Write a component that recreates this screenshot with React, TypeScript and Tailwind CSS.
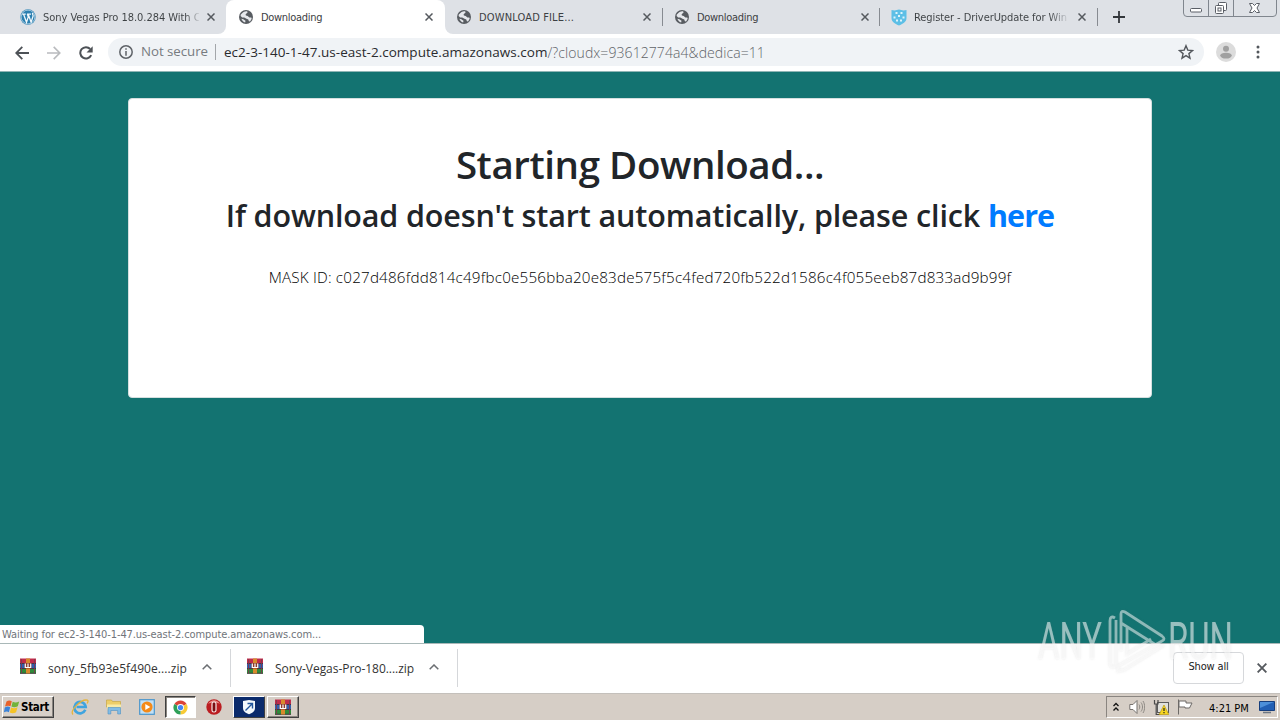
import type { ReactNode } from "react";

function Globe() {
  return (
    <svg viewBox="0 0 16 16" className="h-4 w-4 shrink-0">
      <circle cx="8" cy="8" r="7" fill="#585c61" />
      <path d="M5.2 3.2c1.5-.9 2.8-1 3.9-.9l.5 1.3-2 1.6.3 1.4 1.8.3 1.7 1.5 1.9.2.4 1.2-1.6 2.6-1.2-.1-.6-1.7-1.8-.9-2.3-1.1-2-.2-1.6-1.4.2-1.6z" fill="#e6e8ec" />
      <path d="M3.4 9.8l1.9.5 2.2 1.5-.3 1.6C5.200 13 4 11.700 3.400 9.800z" fill="#e6e8ec" />
    </svg>
  );
}

function WordPress() {
  return (
    <svg viewBox="0 0 16 16" className="h-4 w-4 shrink-0">
      <circle cx="8" cy="8" r="7.700" fill="#2a7fb0" />
      <circle cx="8" cy="8" r="6.900" fill="none" stroke="#d6e6f0" strokeWidth=".7" />
      <path d="M2.200 5h3.600M7 5h4M3.500 5l3 8.300L8.300 8 7.300 5M8.200 5l2.900 8.200 2-6.200c.2-1.200-.8-1.600-.6-3" fill="none" stroke="#f2f8fc" strokeWidth="1.250" />
    </svg>
  );
}

function Shield() {
  return (
    <svg viewBox="0 0 16 17" className="h-[17px] w-4 shrink-0">
      <path d="M.5 1l3 .6L8 .5l4.500 1.100 3-.6v8c0 4-4 6-7.500 7.500C4.500 15 .5 13 .5 9z" fill="#5dbfe6" />
      <path d="M4.500 4h2M9.500 4h2M7 7h2M2.500 8.500h2M11.500 8.500h2M5 11.500h2M9 11.500h2" stroke="#dff4fb" strokeWidth="2.200" />
    </svg>
  );
}

function Cross({ className = "h-2 w-2" }: { className?: string }) {
  return (
    <svg viewBox="0 0 8 8" className={`${className} shrink-0`}>
      <path d="M.5.5l7 7M7.500.5l-7 7" stroke="#55595e" strokeWidth="1.500" />
    </svg>
  );
}

function Tab({ icon, children, className = "" }: { icon: ReactNode; children: ReactNode; className?: string }) {
  return (
    <div className={`flex h-[34px] shrink-0 items-center pl-3 text-[11px] text-[#3c4043] ${className}`}>
      {icon}
      <span className="mt-0.5 ml-[7px] w-[156px] overflow-hidden leading-4 whitespace-nowrap">{children}</span>
      <span className="ml-1.5 flex w-3 justify-center">
        <Cross />
      </span>
    </div>
  );
}

function WindowButtons() {
  return (
    <svg viewBox="0 0 94 18" className="ml-auto mr-[3px] h-[18px] w-[94px] self-start">
      <path d="M.5 0v13q0 3.500 3.500 3.500h86q3.500 0 3.500-3.500V0M25.500 0v16M50.500 0v16" fill="none" stroke="#80868e" />
      <rect x="7.500" y="8.500" width="11" height="3.500" rx="1" fill="#fff" stroke="#5a5e66" />
      <rect x="35.500" y="2.500" width="8" height="8" rx="1" fill="#fff" stroke="#5a5e66" />
      <rect x="32.500" y="5.500" width="8" height="8" rx="1" fill="#fff" stroke="#5a5e66" />
      <rect x="35" y="8" width="3" height="3" fill="#fff" stroke="#5a5e66" />
      <path d="M66.500 3.500h3l2 2 2-2h3L74 8l2.500 4.500h-3l-2-2-2 2h-3L69 8z" fill="#fff" stroke="#5a5e66" />
    </svg>
  );
}

function Archive({ className = "" }: { className?: string }) {
  return (
    <svg viewBox="0 0 16 16" className={`h-4 w-4 shrink-0 ${className}`}>
      <path d="M0 .5h16v5H0z" fill="#c02c4a" />
      <path d="M0 5.500h16v5H0z" fill="#315fae" />
      <path d="M0 10.500h16v5H0z" fill="#2f8a3a" />
      <path d="M0 5.500h16M0 10.500h16M0 15.300h16" stroke="#3a2030" strokeWidth=".8" />
      <path d="M1.500 1v14M14.500 1v14" stroke="#7e3a50" strokeWidth=".9" />
      <path d="M6 .5h4v15H6z" fill="#d98a2c" />
      <path d="M4.500 5h7v5.500h-7z" fill="#8b3b2c" />
      <path d="M5.300 5.500v4h5.400v-4M8 5.500v3.500" fill="none" stroke="#fff" strokeWidth="1.200" />
    </svg>
  );
}

function Download({ name, className }: { name: string; className: string }) {
  return (
    <div className="flex h-[38px] items-center border-r border-[#d5d7da]">
      <Archive className="mb-1" />
      <span className={`mt-0.5 ml-3 w-[139px] shrink-0 text-[12px] whitespace-nowrap text-[#333] font-['Open_Sans',sans-serif] ${className}`}>{name}</span>
      <svg viewBox="0 0 10 6" className="mr-[18px] mb-0.5 ml-[15px] h-1.5 w-2.5">
        <path d="M.7 5.300L5 1l4.300 4.300" fill="none" stroke="#6b6e72" strokeWidth="1.500" />
      </svg>
    </div>
  );
}

function TabStrip() {
  return (
    <div className="flex h-[34px] items-center bg-[#dee1e6]">
      <div className="h-[34px] w-[226px] bg-white">
        <Tab icon={<WordPress />} className="rounded-br-lg bg-[#dee1e6] pl-5 tracking-[-0.040px]">
          <span className="bg-linear-to-r from-[#3c4043] from-90% to-[#dee1e6] bg-clip-text text-transparent">Sony Vegas Pro 18.0.284 With C</span>
        </Tab>
      </div>
      <div className="w-[219px] self-stretch bg-[#dee1e6]">
        <Tab icon={<Globe />} className="rounded-t-lg bg-white tracking-[-0.3px]">Downloading</Tab>
      </div>
      <div className="w-[218px] bg-white">
        <Tab icon={<Globe />} className="rounded-bl-lg bg-[#dee1e6] pl-[11px] tracking-[0.15px]">DOWNLOAD FILE...</Tab>
      </div>
      <div className="-ml-px h-[18px] w-px bg-[#878b91]" />
      <div className="w-[217px]">
        <Tab icon={<Globe />} className="pl-[11px] tracking-[-0.3px]">Downloading</Tab>
      </div>
      <div className="-ml-px h-[18px] w-px bg-[#878b91]" />
      <div className="w-[218px]">
        <Tab icon={<Shield />} className="pl-[11px] tracking-[-0.080px]">
          <span className="bg-linear-to-r from-[#3c4043] from-88% to-[#c6cad0] bg-clip-text text-transparent">Register - DriverUpdate for Win</span>
        </Tab>
      </div>
      <div className="-ml-px h-[18px] w-px bg-[#878b91]" />
      <svg viewBox="0 0 12 12" className="ml-[15px] h-3 w-3">
        <path d="M6 0v12M0 6h12" stroke="#33373b" strokeWidth="1.800" />
      </svg>
      <WindowButtons />
    </div>
  );
}

function Toolbar() {
  return (
    <div className="flex h-[38px] items-center border-b border-[#8fb5b5] bg-white pl-[15px] font-['Open_Sans',sans-serif]">
      <svg viewBox="0 0 14 14" className="h-3.5 w-3.5">
        <path d="M14 7H1.500M7.300.9L1.200 7l6.100 6.100" fill="none" stroke="#4d5156" strokeWidth="1.800" />
      </svg>
      <svg viewBox="0 0 14 14" className="ml-[18px] h-3.5 w-3.5">
        <path d="M0 7h12.500M6.700.9L12.800 7l-6.100 6.100" fill="none" stroke="#b9bbbe" strokeWidth="1.600" />
      </svg>
      <svg viewBox="0 0 14 14" className="ml-[18px] h-3.5 w-3.5">
        <path d="M12.200 9.200A5.700 5.700 0 1 1 11.200 3" fill="none" stroke="#4d5156" strokeWidth="2" />
        <path d="M13.700.2v6.200H7.500z" fill="#4d5156" />
      </svg>
      <div className="mb-px ml-[15px] flex h-7 w-[1096px] items-center rounded-full bg-[#f0f3f6] pl-[11px] whitespace-nowrap">
        <svg viewBox="0 0 14 14" className="h-3.5 w-3.5">
          <circle cx="7" cy="7" r="6.200" fill="none" stroke="#5f6368" strokeWidth="1.500" />
          <path d="M7 3.200v1.600M7 6v4.800" stroke="#5f6368" strokeWidth="1.500" />
        </svg>
        <span className="ml-2 w-[67px] text-[13.3px] tracking-[-0.050px] text-[#777b80]">Not secure</span>
        <span className="ml-[7px] h-4 w-px bg-[#a3a6aa]" />
        <span className="ml-2 text-[13.5px] tracking-[0.020px] text-[#2a2b2e]">ec2-3-140-1-47.us-east-2.compute.amazonaws.com</span>
        <span className="text-[14px] font-light tracking-[0.080px] text-[#5f6368]">/?cloudx=93612774a4&amp;dedica=11</span>
        <svg viewBox="0 0 16 16" className="ml-auto mr-2.5 h-4 w-4">
          <path d="M8 1.700l1.800 4.400 4.700.4-3.600 3.100 1.100 4.600L8 11.700l-4 2.500 1.100-4.600L1.500 6.500l4.700-.4z" fill="none" stroke="#53575c" strokeWidth="1.400" />
        </svg>
      </div>
      <svg viewBox="0 0 20 20" className="mb-px ml-3 h-5 w-5">
        <circle cx="10" cy="10" r="10" fill="#dcdcdc" />
        <circle cx="10" cy="6.700" r="3" fill="#a0a0a0" />
        <ellipse cx="10" cy="13.600" rx="5.800" ry="2.900" fill="#a0a0a0" />
      </svg>
      <svg viewBox="0 0 4 14" className="mb-px ml-5 h-3.5 w-1" fill="#53575c">
        <circle cx="2" cy="2" r="1.500" />
        <circle cx="2" cy="7" r="1.500" />
        <circle cx="2" cy="12" r="1.500" />
      </svg>
    </div>
  );
}

function Page() {
  return (
    <main className="flex h-[571px] flex-col items-center bg-[#137371] pt-[26px] font-['Open_Sans',sans-serif]">
      <section className="h-[300px] w-[1024px] rounded border border-[#d5dfdf] bg-white text-center text-[#212529]">
        <h1 className="mt-[41px] text-[38.5px] leading-[48px] font-semibold tracking-[-0.43px]">Starting Download...</h1>
        <h2 className="mt-2 text-[30.5px] leading-[38px] font-semibold tracking-[-0.14px] whitespace-nowrap">
          If download doesn't start automatically, please click <a className="font-bold tracking-[-0.9px] text-[#007bff]">here</a>
        </h2>
        <p className="mt-[31px] text-[15.2px] leading-6 font-light tracking-[0.2px] text-black">
          MASK ID: c027d486fdd814c49fbc0e556bba20e83de575f5c4fed720fb522d1586c4f055eeb87d833ad9b99f
        </p>
      </section>
      <div className="mt-auto h-[18px] w-[424px] self-start rounded-tr bg-white pl-[2px] text-[11px] leading-[20px] tracking-[-0.090px] whitespace-nowrap text-[#70747a] font-['DejaVu_Sans_Condensed','DejaVu_Sans',sans-serif]">
        Waiting for ec2-3-140-1-47.us-east-2.compute.amazonaws.com...
      </div>
    </main>
  );
}

function Shelf() {
  return (
    <div className="flex h-[50px] items-center border-t border-[#a9b8b8] bg-white pb-px pl-5">
      <Download name="sony_5fb93e5f490e....zip" className="tracking-[0.080px]" />
      <div className="w-4" />
      <Download name="Sony-Vegas-Pro-180....zip" className="tracking-[-0.040px]" />
      <button className="mb-px ml-auto h-8 w-[71px] rounded border border-[#d6d8db] text-[11px] tracking-[-0.15px] text-[#222]">Show all</button>
      <Cross className="mr-[13px] ml-[13px] h-2.5 w-2.5" />
    </div>
  );
}

function Taskbar() {
  return (
    <div className="flex h-[27px] items-center border-t border-[#c4c0bb] bg-[#d6cec6] text-[11px] text-black">
      <div className="ml-0.5 flex h-[22px] w-[52px] items-center border border-t-white border-r-[#404040] border-b-[#404040] border-l-white bg-[#d8d0c8] pl-px shadow-[inset_-1px_-1px_0_#8a8580]">
        <svg viewBox="0 0 16 16" className="h-4 w-4 shrink-0">
          <path d="M2.500 2.500C4.500 1 6.200 1.300 7.800 2.200L6.500 7.300C4.800 6.400 3.100 6.400 1 7.600z" fill="#e8622a" />
          <path d="M8.700 2.700c2 1.100 4 1 6.500-.3L13.800 7.300c-2.300 1.200-4.300 1.200-6.400.3z" fill="#72b33c" />
          <path d="M.8 8.500c2-1.200 3.700-1.100 5.400-.3L4.900 13.200c-1.500-.9-3-.9-5 .2z" fill="#3b83d8" />
          <path d="M7.100 8.600c2 .9 4.100.9 6.400-.3l-1.400 5c-2.200 1.100-4.300 1.100-6.300.3z" fill="#f5c327" />
        </svg>
        <span className="ml-px text-[11.5px] leading-4 font-bold tracking-[-0.3px]">Start</span>
      </div>
      <svg viewBox="0 0 18 18" className="ml-[17px] h-[18px] w-[18px]">
        <path d="M14.300 11.800A5.700 5.700 0 1 1 14.700 9H5.500" fill="none" stroke="#3fa4df" strokeWidth="2.600" />
        <path d="M2 16.500C-1.500 13 10 .5 16.500 2.200c1 .6.3 2.300-.4 3.300" fill="none" stroke="#e7b43a" strokeWidth="1.300" />
      </svg>
      <svg viewBox="0 0 18 18" className="ml-4 h-[18px] w-[18px]">
        <path d="M1.500 4V2h5l1 1.500h8V9h-14z" fill="#edce68" stroke="#c9a744" strokeWidth=".7" />
        <path d="M2 6.500h14v5H2z" fill="#f8eaa6" />
        <path d="M3 9.500h12.500V16h-2.800v-3.500H5.800V16H3z" fill="#82bce5" stroke="#4e91c3" strokeWidth=".6" />
      </svg>
      <svg viewBox="0 0 16 16" className="ml-4 h-4 w-4">
        <rect x=".7" y=".7" width="14.600" height="14.600" fill="#c2e0f5" stroke="#4a96cc" strokeWidth="1.200" />
        <circle cx="8" cy="8" r="5.600" fill="#f48a18" />
        <path d="M6.300 4.900v6.200L11.300 8z" fill="#fff" />
      </svg>
      <div className="ml-[10px] flex h-[22px] w-[31px] items-center justify-center border border-t-[#404040] border-r-white border-b-white border-l-[#404040] bg-white shadow-[inset_1px_1px_0_#8a8580]">
        <svg viewBox="0 0 16 16" className="h-[15px] w-[15px]">
          <path d="M8 8L1.500 4.200A7.500 7.500 0 0 1 14.500 4.200z" fill="#db4437" />
          <path d="M8 8l6.500-3.800A7.500 7.500 0 0 1 8 15.500z" fill="#f8ca35" />
          <path d="M8 8v7.500A7.500 7.500 0 0 1 1.500 4.200z" fill="#2fa058" />
          <circle cx="8" cy="8" r="3.700" fill="#fff" />
          <circle cx="8" cy="8" r="2.800" fill="#4285f4" />
        </svg>
      </div>
      <svg viewBox="0 0 16 16" className="ml-[10px] h-4 w-4">
        <circle cx="8" cy="8" r="7.700" fill="#bb1d21" />
        <path d="M2 5c3-5 9-5 12 0-3-2-9-2-12 0z" fill="#e88a86" />
        <rect x="6" y="3" width="4" height="10" rx="1.800" fill="#7a0e12" stroke="#f8e9e8" strokeWidth="1.200" />
      </svg>
      <div className="ml-[11px] flex h-[22px] w-[32px] items-center justify-center border border-t-white border-r-[#404040] border-b-[#404040] border-l-white bg-[#0b2a6b]">
        <svg viewBox="0 0 14 16" className="h-4 w-3.5">
          <path d="M1 2l6-1 6 1v7c0 3.500-3 5-6 6.300C4 14 1 12.500 1 9z" fill="#f4f8fc" />
          <path d="M3.500 11.500L10 5M5.500 4.500h5v5" fill="none" stroke="#22559c" strokeWidth="1.400" />
        </svg>
      </div>
      <div className="ml-0.5 flex h-[22px] w-[32px] items-center justify-center border border-t-white border-r-[#404040] border-b-[#404040] border-l-white shadow-[inset_-1px_-1px_0_#8a8580]">
        <Archive />
      </div>
      <div className="mr-0.5 ml-auto flex h-[22px] w-[172px] items-center border border-t-[#8a8580] border-r-white border-b-white border-l-[#8a8580] pl-1.5">
        <svg viewBox="0 0 6 10" className="h-2.5 w-1.5">
          <path d="M.5 4L3 1.500 5.500 4M.5 8.500L3 6l2.500 2.500" fill="none" stroke="#111" strokeWidth="1.300" />
        </svg>
        <svg viewBox="0 0 16 16" className="ml-2.5 h-4 w-4">
          <path d="M.8 5.500H4l4-4v13l-4-4H.8z" fill="#fff" stroke="#77736f" />
          <path d="M10 5.500c1 1.500 1 3.500 0 5M12 3.500c2 2.500 2 6.500 0 9M14 2c2.200 3.500 2.200 8.500 0 12" fill="none" stroke="#85817c" strokeWidth=".9" />
        </svg>
        <svg viewBox="0 0 16 16" className="ml-2 h-4 w-4">
          <rect x="4.500" y="3.500" width="11" height="10" fill="#e0e0dc" stroke="#5b5b5b" />
          <path d="M1.500 1v4h3.500V1M3.200 5v10.500h4" fill="none" stroke="#4a4a4a" strokeWidth="1.200" />
          <path d="M11 6l4.800 9.500H6.200z" fill="#f7d620" stroke="#b99a10" strokeWidth=".7" />
          <path d="M11 9v3M11 13v1.300" stroke="#222" strokeWidth="1.200" />
        </svg>
        <svg viewBox="0 0 16 16" className="ml-2 h-4 w-4">
          <path d="M1.500.5v15M2 2h7v2h6l-2.500 5H8V8H2z" fill="#fff" stroke="#6c6966" />
        </svg>
        <span className="mt-1 ml-4 w-10 whitespace-nowrap">4:21 PM</span>
        <svg viewBox="0 0 16 14" className="ml-[10px] h-3.5 w-4 shrink-0">
          <path d="M.5 1.500h15v9H.5z" fill="#215fb4" stroke="#163e7d" />
          <path d="M1 2h14L1 8z" fill="#4c8fd9" />
          <path d="M4 12.500h8" stroke="#6d7682" strokeWidth="1.500" />
        </svg>
      </div>
    </div>
  );
}

function Watermark() {
  return (
    <svg viewBox="0 0 200 68" className="pointer-events-none absolute top-[606px] left-[1036px] h-[68px] w-[200px] [filter:drop-shadow(0_0_1px_rgba(110,110,110,0.28))]">
      <g fill="#ffffff" fillOpacity=".55" fontFamily="Roboto, sans-serif" fontSize="51">
        <text x="2" y="53" textLength="64" lengthAdjust="spacingAndGlyphs">ANY</text>
        <text x="132" y="53" textLength="65" lengthAdjust="spacingAndGlyphs">RUN</text>
      </g>
      <path d="M79 12q-5-3-5 3v42q0 6 6 3V14M85 45V8q0-4 4-2l37 24q4 3 0 5L82 60v5l6-1 40-25M85 17l35 22M91 22v26l24-15" fill="none" stroke="#fff" strokeOpacity=".5" strokeWidth="2.800" />
    </svg>
  );
}

export default function App() {
  return (
    <div className="relative h-[720px] w-[1280px] overflow-hidden bg-white font-['DejaVu_Sans_Condensed','DejaVu_Sans',sans-serif]">
      <TabStrip />
      <Toolbar />
      <Page />
      <Shelf />
      <Taskbar />
      <Watermark />
    </div>
  );
}
